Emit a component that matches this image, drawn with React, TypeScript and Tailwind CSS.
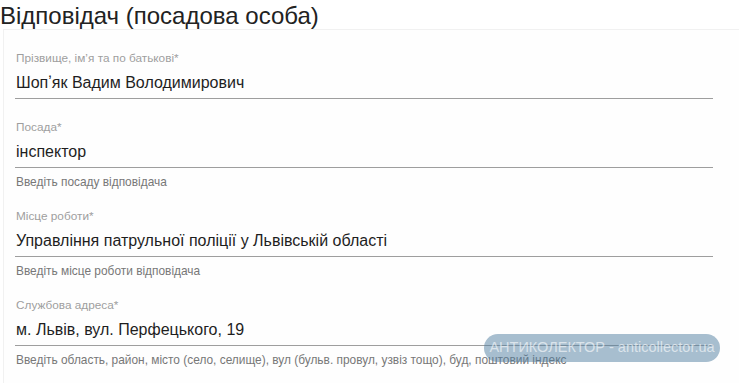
import React from "react";

type Field = { label: string; value: string; helper?: string };

const fields: Field[] = [
  { label: "Прізвище, імʼя та по батькові*", value: "Шопʼяк Вадим Володимирович" },
  { label: "Посада*", value: "інспектор", helper: "Введіть посаду відповідача" },
  { label: "Місце роботи*", value: "Управління патрульної поліції у Львівській області", helper: "Введіть місце роботи відповідача" },
  {
    label: "Службова адреса*",
    value: "м. Львів, вул. Перфецького, 19",
    helper: "Введіть область, район, місто (село, селище), вул (бульв. провул, узвіз тощо), буд, поштовий індекс",
  },
];

export default function App() {
  return (
    <div className="relative w-[739px] h-[383px] overflow-hidden bg-white font-['Liberation_Sans',Arial,sans-serif]">
      <div className="h-[29px] pt-[2px] text-[24px] leading-[27px] text-[#222] whitespace-nowrap">
        Відповідач (посадова особа)
      </div>
      <div className="border-t border-l border-[#f1f1f1] bg-[#fefefe] ml-[3px] pl-[11px] pr-[26px] pt-[20px] h-[400px]">
        {fields.map((f, i) => (
          <div key={i} className={i === 0 ? "" : f.helper && fields[i - 1].helper ? "mt-[18px]" : "mt-[20px]"}>
            <div className="text-[11.8px] leading-[16px] text-[#9e9e9e] pl-[1px]">{f.label}</div>
            <div className="mt-[5px] pb-[3px] border-b border-[#9e9e9e] text-[16px] leading-[24px] text-[#1e1e1e] pl-[1px] whitespace-nowrap">
              {f.value}
            </div>
            {f.helper && (
              <div className="mt-[6px] text-[11.9px] leading-[16px] text-[#777] pl-[1px] whitespace-nowrap">{f.helper}</div>
            )}
          </div>
        ))}
      </div>
      <div className="absolute left-[484px] top-[334px] w-[236px] h-[28px] rounded-[14px] bg-[rgba(80,125,160,0.5)] flex items-center justify-center text-[14.5px] text-[rgba(255,255,255,0.6)] whitespace-nowrap">
        АНТИКОЛЕКТОР - anticollector.ua
      </div>
    </div>
  );
}
